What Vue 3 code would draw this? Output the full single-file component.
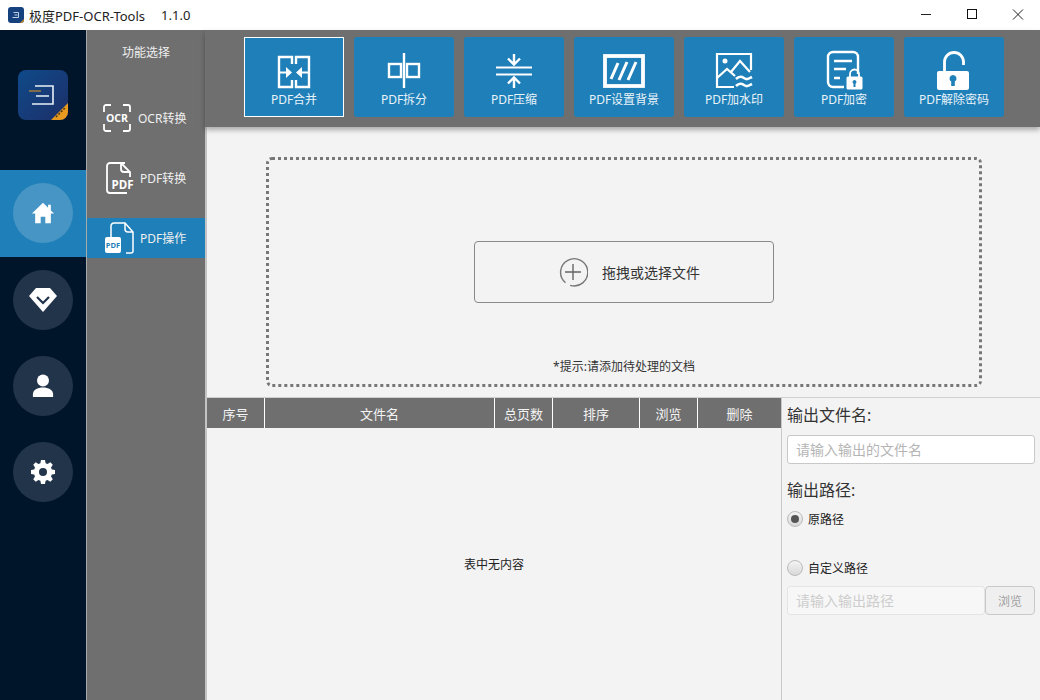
<template>
  <div class="window">
    <div class="titlebar">
      <svg class="app-icon" width="16" height="16" viewBox="0 0 16 16">
        <rect width="16" height="16" rx="3" fill="#15417f" />
        <path d="M5.500 5.500h5v5h-6M6.500 8h3" fill="none" stroke="#cfe0ee" stroke-width="0.900" />
        <path d="M12 16l4-4v2l-2 2z" fill="#c98a2a" />
      </svg>
      <span class="app-name">极度PDF-OCR-Tools</span>
      <span class="app-version">1.1.0</span>
      <div class="win-buttons">
        <svg class="win-btn" width="46" height="30" viewBox="0 0 46 30"><path d="M19 14.500h10" stroke="#222" fill="none" /></svg>
        <svg class="win-btn" width="46" height="30" viewBox="0 0 46 30"><rect x="19.500" y="9.500" width="9" height="9" stroke="#111" fill="none" /></svg>
        <svg class="win-btn" width="46" height="30" viewBox="0 0 46 30"><path d="M19 9.500l10 10M29 9.500l-10 10" stroke="#222" fill="none" /></svg>
      </div>
    </div>

    <div class="body">
      <nav class="nav">
        <div class="logo">
          <svg width="50" height="50" viewBox="0 0 50 50">
            <defs>
              <linearGradient id="logoFill" x1="0" y1="0" x2="1" y2="1">
                <stop offset="0" stop-color="#0f4a8a" />
                <stop offset="1" stop-color="#1d2f68" />
              </linearGradient>
            </defs>
            <rect width="50" height="50" rx="8" fill="url(#logoFill)" />
            <path d="M17 16h18v18H14M18 26h13" fill="none" stroke="#e8f1f8" stroke-width="1.600" />
            <path d="M11 21h12" stroke="#e79a1f" stroke-width="1" />
            <path d="M33 50l17-17v9a8 8 0 0 1-8 8z" fill="#e79a1f" />
            <path d="M38 47l9-9" stroke="#4a3410" stroke-width="1.500" stroke-dasharray="2 1.500" />
          </svg>
        </div>
        <div class="nav-item active">
          <div class="nav-circle">
            <svg width="24" height="24" viewBox="0 0 26 26"><path d="M13 2L1 13.500h3.500V24h6v-7h5v7h6V13.500H25L21.500 10.200V4h-3v3.300z" fill="#fff" /></svg>
          </div>
        </div>
        <div class="nav-item">
          <div class="nav-circle">
            <svg width="28" height="24" viewBox="0 0 28 24"><path d="M7 0h14l7 8-14 16L0 8z" fill="#fff" /><path d="M8 9l6 6 6-6" fill="none" stroke="#22344a" stroke-width="2.200" /></svg>
          </div>
        </div>
        <div class="nav-item">
          <div class="nav-circle">
            <svg width="22" height="24" viewBox="0 0 24 26"><circle cx="12" cy="7" r="6.500" fill="#fff" /><path d="M1 25v-3c0-5 5-7.500 11-7.500S23 17 23 22v3z" fill="#fff" /></svg>
          </div>
        </div>
        <div class="nav-item">
          <div class="nav-circle">
            <svg width="24" height="24" viewBox="0 0 24 24"><path fill="#fff" fill-rule="evenodd" d="M10 0h4l.6 3.200 2 .8L19.300 2.200l2.500 2.500L20 7.400l.8 2 3.200.6v4l-3.200.6-.8 2 1.800 2.700-2.500 2.500-2.700-1.800-2 .8L14 24h-4l-.6-3.200-2-.8-2.700 1.800-2.500-2.500L4 16.600l-.8-2L0 14v-4l3.200-.6.8-2-1.800-2.700 2.500-2.500L7.400 4l2-.8zM12 8a4 4 0 1 0 0 8 4 4 0 0 0 0-8z" /></svg>
          </div>
        </div>
      </nav>

      <aside class="side">
        <div class="side-title">功能选择</div>
        <div class="side-item ocr">
          <svg class="side-icon" width="30" height="30" viewBox="0 0 30 30">
            <path d="M9 2H4a2 2 0 0 0-2 2v5M21 2h5a2 2 0 0 1 2 2v5M9 28H4a2 2 0 0 1-2-2v-5M21 28h5a2 2 0 0 0 2-2v-5" fill="none" stroke="#fff" stroke-width="1.800" />
            <text x="15" y="19" class="svg-word" font-size="10.500" text-anchor="middle">OCR</text>
          </svg>
          <span>OCR转换</span>
        </div>
        <div class="side-item">
          <svg class="side-icon" width="30" height="32" viewBox="0 0 30 32">
            <path d="M20 1H5a3 3 0 0 0-3 3v24a3 3 0 0 0 3 3h17M16 1l9 9v5M16 1v6a3 3 0 0 0 3 3h6" fill="none" stroke="#fff" stroke-width="1.800" />
            <rect x="6" y="15" width="25" height="13" fill="#6f6f6f" />
            <text x="17.500" y="26.500" class="svg-word" font-size="11.500" text-anchor="middle">PDF</text>
          </svg>
          <span>PDF转换</span>
        </div>
        <div class="side-item active">
          <svg class="side-icon" width="30" height="32" viewBox="0 0 30 32">
            <path d="M6 15V4a3 3 0 0 1 3-3h11l8 9v19a2 2 0 0 1-2 2h-5M20 1v6a3 3 0 0 0 3 3h5" fill="none" stroke="#fff" stroke-width="1.500" />
            <rect x="0" y="15" width="16" height="16" rx="2" fill="#fff" />
            <text x="8" y="26" class="svg-word blue" font-size="7.500" text-anchor="middle">PDF</text>
          </svg>
          <span>PDF操作</span>
        </div>
      </aside>

      <main class="main">
        <div class="toolbar">
          <div class="tool selected">
            <svg class="tool-icon" width="44" height="40" viewBox="-2 0 44 40">
              <path d="M18 14V7H5v30h13v-7M22 14V7h13v30H22v-7" fill="none" stroke="#fff" stroke-width="2.400" />
              <path d="M6 22.500h7M34 22.500h-7" stroke="#fff" stroke-width="2" />
              <path d="M12 17l6 5.500-6 5.500zM28 17l-6 5.500 6 5.500z" fill="#fff" />
            </svg>
            <span>PDF合并</span>
          </div>
          <div class="tool">
            <svg class="tool-icon" width="44" height="40" viewBox="-2 0 44 40">
              <path d="M20 3v35" stroke="#fff" stroke-width="2.400" />
              <rect x="5" y="14" width="12" height="13" fill="none" stroke="#fff" stroke-width="2.400" />
              <rect x="23" y="14" width="12" height="13" fill="none" stroke="#fff" stroke-width="2.400" />
            </svg>
            <span>PDF拆分</span>
          </div>
          <div class="tool">
            <svg class="tool-icon" width="44" height="40" viewBox="-2 0 44 40">
              <path d="M2 17.500h36M2 24.500h36" stroke="#fff" stroke-width="2" />
              <path d="M20 4v10M14 8.500l6 6 6-6M20 28v10M14 33.500l6-6 6 6" fill="none" stroke="#fff" stroke-width="2.400" />
            </svg>
            <span>PDF压缩</span>
          </div>
          <div class="tool">
            <svg class="tool-icon" width="44" height="40" viewBox="-2 0 44 40">
              <rect x="1" y="6" width="38" height="30" fill="none" stroke="#fff" stroke-width="3.800" />
              <path d="M14 13L7 29M23 12l-8 18M32 12l-8 18" stroke="#fff" stroke-width="3" />
            </svg>
            <span>PDF设置背景</span>
          </div>
          <div class="tool">
            <svg class="tool-icon" width="44" height="40" viewBox="-2 0 44 40">
              <path d="M20 37H3V4h34v16" fill="none" stroke="#fff" stroke-width="2.200" />
              <circle cx="11" cy="11" r="2.500" fill="#fff" />
              <path d="M3 28l10-9 8 7M17 22l9-11 10 11" fill="none" stroke="#fff" stroke-width="2.200" />
              <path d="M22 29c3-3 5-3 8-1s4 1 8-1M22 36c3-3 5-3 8-1s4 1 8-1" fill="none" stroke="#fff" stroke-width="2.600" />
            </svg>
            <span>PDF加水印</span>
          </div>
          <div class="tool">
            <svg class="tool-icon" width="44" height="40" viewBox="-2 0 44 40">
              <path d="M20 37H9a5 5 0 0 1-5-5V7a5 5 0 0 1 5-5h20a5 5 0 0 1 5 5v17" fill="none" stroke="#fff" stroke-width="2.400" />
              <path d="M10 11h18M10 19h12M10 28h6" stroke="#fff" stroke-width="2.400" />
              <path d="M26 27v-3a4.500 4.500 0 0 1 9 0v3" fill="none" stroke="#fff" stroke-width="1.800" />
              <path fill="#fff" fill-rule="evenodd" d="M24 26.500h13a1.500 1.500 0 0 1 1.500 1.500v10a1.500 1.500 0 0 1-1.500 1.500H24a1.500 1.500 0 0 1-1.500-1.500V28a1.500 1.500 0 0 1 1.500-1.500zM30.500 30a2 2 0 0 0-1 3.700V37h2v-3.300a2 2 0 0 0-1-3.700z" />
            </svg>
            <span>PDF加密</span>
          </div>
          <div class="tool">
            <svg class="tool-icon" width="44" height="40" viewBox="-2 0 44 40">
              <path d="M10.500 21v-9a9.500 9.500 0 0 1 19 0v3" fill="none" stroke="#fff" stroke-width="2.800" />
              <path fill="#fff" fill-rule="evenodd" d="M5 21h28a2 2 0 0 1 2 2v15a2 2 0 0 1-2 2H5a2 2 0 0 1-2-2V23a2 2 0 0 1 2-2zM19 25a3.500 3.500 0 0 0-1.800 6.500V36h3.600v-4.500A3.500 3.500 0 0 0 19 25z" />
            </svg>
            <span>PDF解除密码</span>
          </div>
        </div>

        <section class="drop-wrap">
          <div class="drop">
            <div class="drop-button">
              <svg width="30" height="30" viewBox="0 0 32 32">
                <path d="M8 27.500A14.500 14.500 0 1 1 13 30.200" fill="none" stroke="#777" stroke-width="1.500" />
                <path d="M16 7.500v17M7.500 16h17" stroke="#666" stroke-width="1.500" />
              </svg>
              <span>拖拽或选择文件</span>
            </div>
            <div class="drop-hint">*提示:请添加待处理的文档</div>
          </div>
        </section>

        <section class="lower">
          <div class="table">
            <div class="thead">
              <div class="th" style="width: 58px">序号</div>
              <div class="th" style="width: 230px">文件名</div>
              <div class="th" style="width: 58px">总页数</div>
              <div class="th" style="width: 87px">排序</div>
              <div class="th" style="width: 58px">浏览</div>
              <div class="th" style="width: 83px">删除</div>
            </div>
            <div class="tbody">表中无内容</div>
          </div>

          <div class="output">
            <div class="out-label">输出文件名:</div>
            <input class="out-input" placeholder="请输入输出的文件名" />
            <div class="out-label second">输出路径:</div>
            <div class="radio-row">
              <span class="radio checked"></span>
              <span>原路径</span>
            </div>
            <div class="radio-row custom">
              <span class="radio"></span>
              <span>自定义路径</span>
            </div>
            <div class="path-row">
              <input class="out-input path-input" placeholder="请输入输出路径" disabled />
              <button class="browse" disabled>浏览</button>
            </div>
          </div>
        </section>
      </main>
    </div>
  </div>
</template>

<script setup>
</script>

<style scoped>
.window {
  width: 1040px;
  height: 700px;
  display: flex;
  flex-direction: column;
  overflow: hidden;
  font-family: "Noto Sans", "Noto Sans CJK SC", sans-serif;
  font-size: 12px;
}

.titlebar {
  height: 30px;
  flex: none;
  display: flex;
  align-items: center;
  background: #fff;
  padding-left: 8px;
  color: #222;
}

.app-name {
  margin-left: 5px;
  font-size: 13px;
}

.app-version {
  margin-left: 16px;
  font-size: 13px;
}

.win-buttons {
  margin-left: auto;
  display: flex;
}

.win-btn {
  display: block;
}

.body {
  flex: 1;
  display: flex;
  min-height: 0;
}

.nav {
  width: 86px;
  flex: none;
  background: #00142a;
  border-right: 1px solid #a9a9a9;
}

.logo {
  height: 140px;
  box-sizing: border-box;
  padding: 40px 0 0 18px;
}

.logo svg {
  display: block;
}

.nav-item {
  height: 86px;
  display: flex;
  align-items: center;
  justify-content: center;
  padding-bottom: 1px;
  box-sizing: border-box;
}

.nav-item.active {
  height: 87px;
  padding-bottom: 2px;
  background: #1f7fb8;
}

.nav-circle {
  width: 60px;
  height: 60px;
  border-radius: 50%;
  background: #22344a;
  display: flex;
  align-items: center;
  justify-content: center;
}

.active .nav-circle {
  background: #4795c4;
}

.side {
  width: 118px;
  flex: none;
  background: #6f6f6f;
  color: #f0f0f0;
}

.side-title {
  height: 68px;
  box-sizing: border-box;
  padding-top: 14px;
  text-align: center;
  font-size: 12px;
  line-height: 18px;
}

.side-item {
  height: 40px;
  margin-bottom: 20px;
  display: flex;
  align-items: center;
  gap: 5px;
  padding-left: 18px;
  font-size: 12px;
}

.side-item.ocr {
  gap: 6px;
  padding-left: 15px;
}

.side-item.active {
  background: #1f7fb8;
}

.side-icon {
  flex: none;
  overflow: visible;
}

.svg-word {
  fill: #fff;
  font-family: "Open Sans", sans-serif;
  font-weight: 700;
}

.svg-word.blue {
  fill: #1f7fb8;
}

.main {
  flex: 1;
  min-width: 0;
  display: flex;
  flex-direction: column;
  background: #f3f3f3;
  border-left: 2px solid #c4c4c4;
}

.toolbar {
  height: 97px;
  flex: none;
  box-sizing: border-box;
  margin-left: -2px;
  padding: 7px 0 0 39px;
  display: flex;
  gap: 10px;
  background: #6f6f6f;
  box-shadow: 0 3px 5px rgba(0, 0, 0, 0.3);
  position: relative;
}

.tool {
  width: 100px;
  height: 80px;
  box-sizing: border-box;
  background: #1f7fb8;
  border-radius: 3px;
  color: #e9f3fa;
  display: flex;
  flex-direction: column;
  align-items: center;
  padding-top: 13px;
  font-size: 12px;
}

.tool.selected {
  border: 1px solid #fff;
  border-radius: 0;
  padding-top: 12px;
}

.tool-icon {
  display: block;
  flex: none;
  overflow: visible;
}

.tool span {
  line-height: 16px;
  margin-top: 2px;
}

.drop-wrap {
  flex: none;
  height: 270px;
  box-sizing: border-box;
  padding: 30px 58px 0 59px;
}

.drop {
  height: 230px;
  box-sizing: border-box;
  border: 3px dotted #777;
  border-radius: 6px;
  display: flex;
  flex-direction: column;
  align-items: center;
  color: #333;
}

.drop-button {
  width: 300px;
  height: 62px;
  margin-top: 81px;
  box-sizing: border-box;
  border: 1px solid #888;
  border-radius: 4px;
  display: flex;
  align-items: center;
  justify-content: center;
  gap: 14px;
  padding-left: 10px;
  font-size: 14px;
}

.drop-hint {
  margin-top: auto;
  margin-bottom: 8px;
  font-size: 12px;
  line-height: 18px;
}

.lower {
  flex: 1;
  min-height: 0;
  display: flex;
  border-top: 1px solid #cfcfcf;
}

.table {
  width: 574px;
  flex: none;
  display: flex;
  flex-direction: column;
}

.thead {
  height: 30px;
  flex: none;
  display: flex;
  background: #6f6f6f;
}

.th {
  box-sizing: border-box;
  border-right: 1px solid #fff;
  color: #f4f4f4;
  display: flex;
  align-items: center;
  justify-content: center;
  font-size: 13px;
}

.th:last-child {
  border-right: none;
}

.tbody {
  flex: 1;
  display: flex;
  align-items: center;
  justify-content: center;
  padding-bottom: 1px;
  color: #222;
}

.output {
  flex: 1;
  border-left: 1px solid #c9c9c9;
  padding: 6px 5px 0 5px;
  color: #333;
}

.out-label {
  font-size: 16px;
  line-height: 22px;
}

.out-label.second {
  margin-top: 15px;
}

.out-input {
  display: block;
  width: 248px;
  height: 29px;
  margin-top: 9px;
  box-sizing: border-box;
  border: 1px solid #c8c8c8;
  border-radius: 3px;
  background: #fff;
  padding: 0 8px;
  font: inherit;
  font-size: 14px;
  outline: none;
}

.out-input::placeholder {
  color: #b5b5b5;
}

.radio-row {
  display: flex;
  align-items: center;
  gap: 5px;
  height: 18px;
  margin-top: 9px;
  font-size: 12px;
  color: #222;
}

.radio-row.custom {
  margin-top: 31px;
}

.radio {
  width: 16px;
  height: 16px;
  box-sizing: border-box;
  border-radius: 50%;
  border: 1px solid #bbb;
  background: linear-gradient(#f4f4f4, #d8d8d8);
  display: flex;
  align-items: center;
  justify-content: center;
}

.radio.checked::after {
  content: "";
  width: 8px;
  height: 8px;
  border-radius: 50%;
  background: #555;
}

.path-row {
  display: flex;
  margin-top: 9px;
}

.path-input {
  width: 198px;
  margin-top: 0;
  background: #f7f7f7;
  border-color: #e4e4e4;
}

.path-input::placeholder {
  color: #cdcdcd;
}

.browse {
  width: 50px;
  height: 29px;
  box-sizing: border-box;
  border: 1px solid #c8c8c8;
  border-radius: 4px;
  background: #efefef;
  color: #a0a0a0;
  font: inherit;
  font-size: 12px;
  padding: 0;
}
</style>
